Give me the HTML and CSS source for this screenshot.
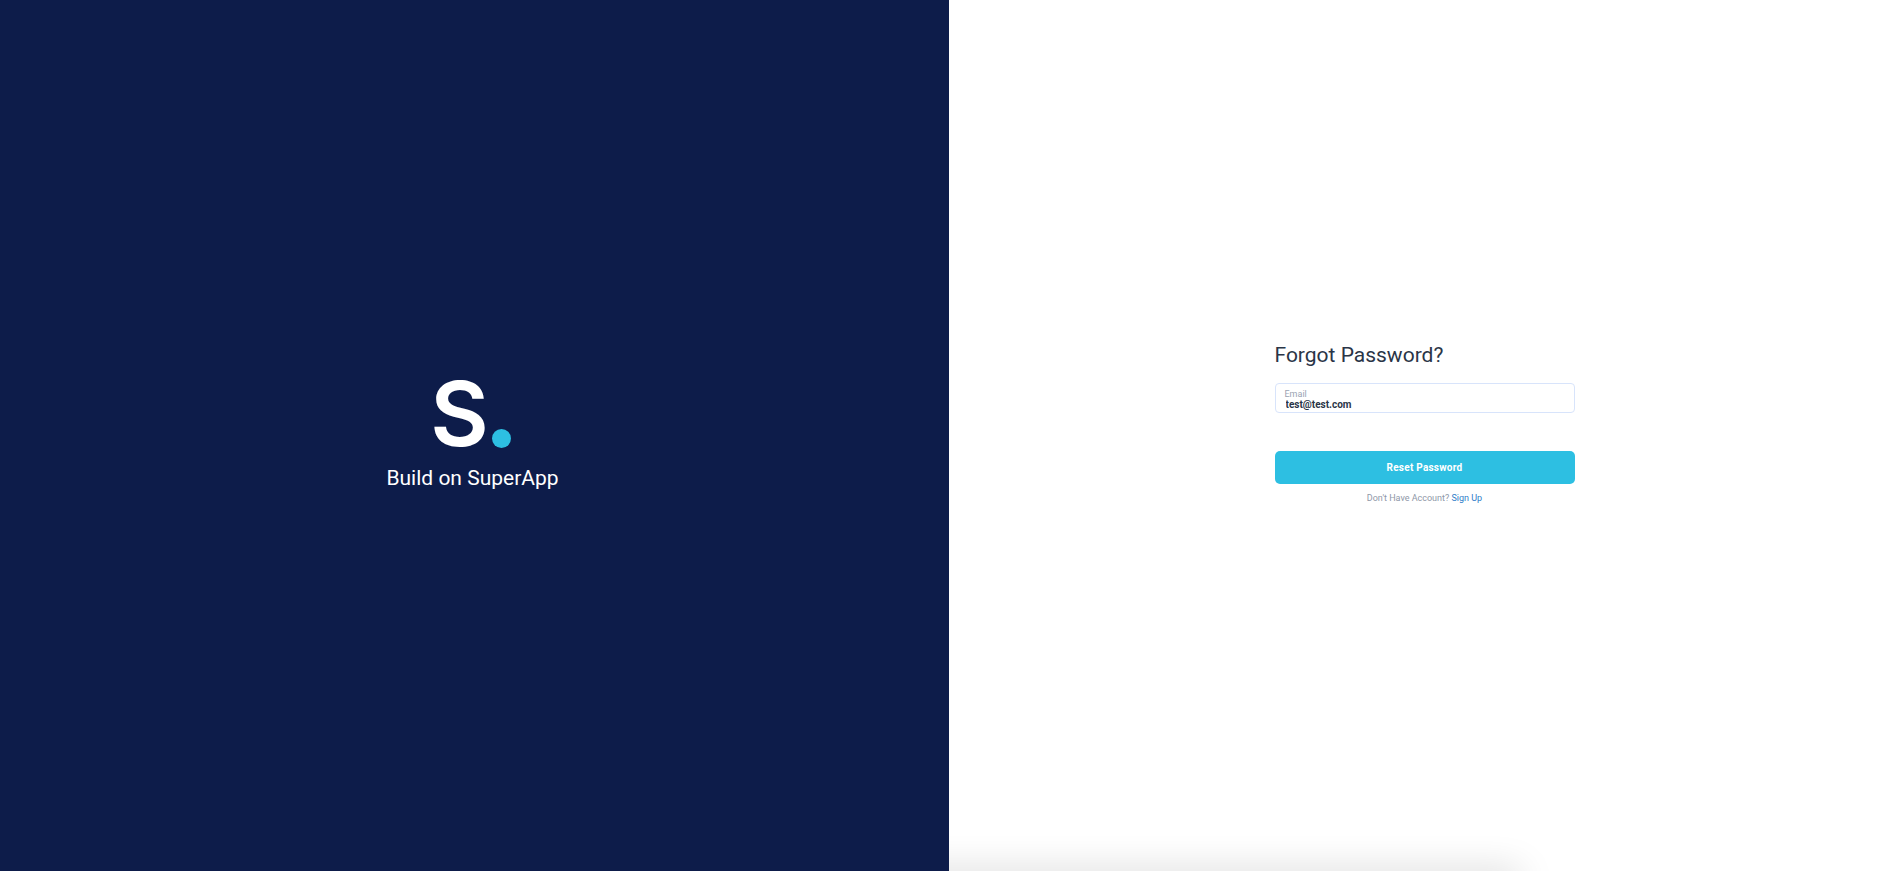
FILE: index.html
```html
<!DOCTYPE html>
<html lang="en">

<head>
    <meta charset="utf-8">
    <meta name="viewport" content="width=device-width, initial-scale=1">
    <title>Forgot Password</title>
    <link rel="stylesheet" href="styles.css">
</head>

<body>
    <main class="split">
        <section class="brand">
            <div class="logo">
                <span class="logo__letter">S</span>
                <span class="logo__dot"></span>
            </div>
            <p class="brand__tagline">Build on SuperApp</p>
        </section>

        <section class="auth">
            <form class="auth__form">
                <h1 class="auth__title">Forgot Password?</h1>
                <label class="field">
                    <span class="field__label">Email</span>
                    <input class="field__input" type="text" value="test@test.com">
                </label>
                <button class="button" type="button">Reset Password</button>
                <p class="auth__foot">Don't Have Account? <a class="auth__link" href="#">Sign Up</a></p>
            </form>
            <div class="auth__shadow"></div>
        </section>
    </main>
</body>

</html>
```

FILE: styles.css
```css
html {
    box-sizing: border-box;
    height: 100%;
}

*,
*:before,
*:after {
    box-sizing: inherit;
}

body {
    font-family: Roboto, "Liberation Sans", sans-serif;
    height: 100%;
    margin: 0;
    overflow: hidden;
}

.split {
    display: flex;
    height: 100%;
}

.brand {
    align-items: center;
    background: #0d1c4a;
    color: #fff;
    display: flex;
    flex-direction: column;
    justify-content: center;
    padding-bottom: 2px;
    padding-right: 4px;
    width: 949px;
}

.logo {
    align-items: flex-end;
    display: flex;
    gap: 3px;
    height: 72px;
    margin-right: 4px;
}

.logo__letter {
    font-family: Inter, sans-serif;
    font-size: 90px;
    font-weight: 600;
    line-height: 72px;
}

.logo__dot {
    background: #2dbfe2;
    border-radius: 50%;
    height: 19px;
    margin-bottom: 2px;
    width: 19px;
}

.brand__tagline {
    font-size: 21px;
    line-height: 26px;
    margin: 15px 0 0;
}

.auth {
    align-items: center;
    background: #fff;
    display: flex;
    flex: 1;
    justify-content: center;
    overflow: hidden;
    position: relative;
}

.auth__form {
    display: flex;
    flex-direction: column;
    padding-bottom: 26px;
    width: 300px;
}

.auth__title {
    color: #2a3547;
    font-size: 21px;
    font-weight: 400;
    line-height: 28px;
    margin: 0 0 14px;
}

.field {
    border: 1px solid #d8e4fb;
    border-radius: 4px;
    display: flex;
    flex-direction: column;
    height: 30px;
    padding: 6px 9px 0;
}

.field__label {
    color: #9aa3b2;
    font-size: 9px;
    line-height: 9px;
}

.field__input {
    background: none;
    border: 0;
    color: #2a3547;
    font-family: inherit;
    font-size: 10px;
    font-weight: 700;
    height: 12px;
    line-height: 12px;
    margin-left: 1px;
    outline: none;
    padding: 0;
}

.button {
    background: #2dbfe2;
    border: 0;
    border-radius: 5px;
    color: #fff;
    font-family: inherit;
    font-size: 10px;
    font-weight: 700;
    height: 33px;
    letter-spacing: 0.25px;
    margin-top: 38px;
    padding: 0;
}

.auth__foot {
    color: #8f98a8;
    font-size: 9px;
    line-height: 12px;
    margin: 8px 0 0;
    text-align: center;
}

.auth__link {
    color: #2f7dc9;
    text-decoration: none;
}

.auth__shadow {
    bottom: -20px;
    box-shadow: 0 0 36px rgba(0, 0, 0, 0.18);
    height: 20px;
    left: -300px;
    position: absolute;
    width: 871px;
}
```
